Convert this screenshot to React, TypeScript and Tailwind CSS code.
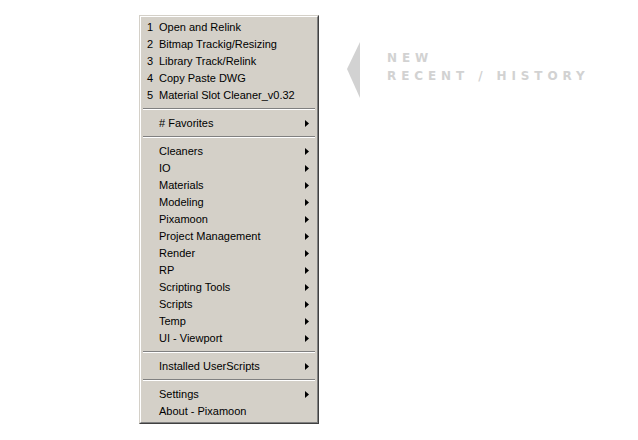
import React from "react";

type Item = { num?: number; label: string; sub?: boolean } | "sep";

const items: Item[] = [
  { num: 1, label: "Open and Relink" },
  { num: 2, label: "Bitmap Trackig/Resizing" },
  { num: 3, label: "Library Track/Relink" },
  { num: 4, label: "Copy Paste DWG" },
  { num: 5, label: "Material Slot Cleaner_v0.32" },
  "sep",
  { label: "# Favorites", sub: true },
  "sep",
  { label: "Cleaners", sub: true },
  { label: "IO", sub: true },
  { label: "Materials", sub: true },
  { label: "Modeling", sub: true },
  { label: "Pixamoon", sub: true },
  { label: "Project Management", sub: true },
  { label: "Render", sub: true },
  { label: "RP", sub: true },
  { label: "Scripting Tools", sub: true },
  { label: "Scripts", sub: true },
  { label: "Temp", sub: true },
  { label: "UI - Viewport", sub: true },
  "sep",
  { label: "Installed UserScripts", sub: true },
  "sep",
  { label: "Settings", sub: true },
  { label: "About - Pixamoon" },
];

function SubArrow() {
  return (
    <svg width="4" height="7" viewBox="0 0 4 7" className="shrink-0">
      <path d="M0 0 L4 3.5 L0 7 Z" fill="#000" />
    </svg>
  );
}

export default function App() {
  return (
    <div
      className="w-[638px] h-[440px] bg-white flex items-start pl-[139px] pt-[15px]"
      style={{ fontFamily: '"Liberation Sans", Arial, sans-serif' }}
    >
      {/* popup menu */}
      <div className="w-[180px] border border-t-[#d4d0c8] border-l-[#d4d0c8] border-r-[#404040] border-b-[#404040] bg-[#d4d0c8]">
        <div className="border border-t-white border-l-white border-r-[#808080] border-b-[#808080] p-[2px]">
          {items.map((it, i) =>
            it === "sep" ? (
              <div key={i} className="h-[11px] pt-[4px]">
                <div className="h-px bg-[#808080]" />
                <div className="h-px bg-white" />
              </div>
            ) : (
              <div key={i} className="h-[17px] flex items-center text-[11px] leading-[17px] text-black pr-[6px]">
                <span className="w-[16px] shrink-0 pl-[4px]">{it.num ?? ""}</span>
                <span className="flex-1 whitespace-nowrap">{it.label}</span>
                {it.sub && <SubArrow />}
              </div>
            )
          )}
        </div>
      </div>

      {/* side hint */}
      <div className="flex items-start ml-[28px] mt-[27px]">
        <svg width="14" height="56" viewBox="0 0 14 56" className="shrink-0" style={{ filter: "blur(0.6px)" }}>
          <path d="M13 0 L13 56 L0 27 Z" fill="#d2d2d2" />
        </svg>
        <div
          className="ml-[26px] mt-[7px] text-[12px] font-bold text-[#d2d2d2] tracking-[4.9px] leading-[18px]"
          style={{ fontFamily: '"DejaVu Sans", Verdana, sans-serif' }}
        >
          <div>NEW</div>
          <div>RECENT / HISTORY</div>
        </div>
      </div>
    </div>
  );
}
